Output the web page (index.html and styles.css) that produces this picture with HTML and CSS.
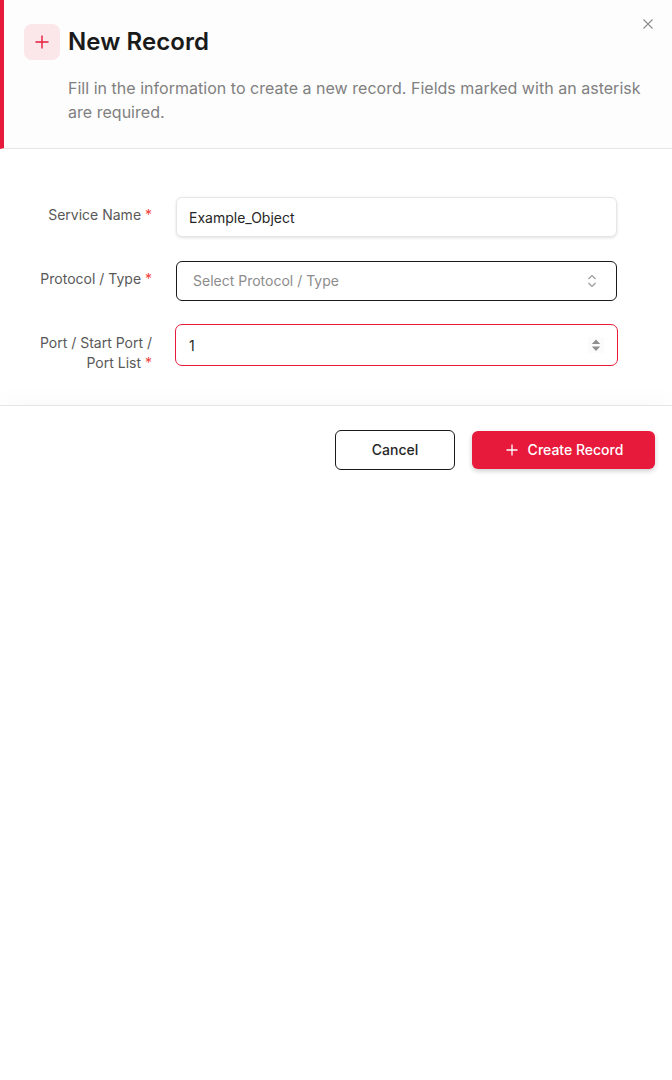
FILE: index.html
```html
<!DOCTYPE html>
<html lang="en">
<head>
<meta charset="utf-8">
<title>New Record</title>
<link rel="stylesheet" href="styles.css">
</head>
<body>
<div class="dialog">
  <header class="header">
    <div class="title-row">
      <span class="title-icon">
        <svg width="16" height="16" viewBox="0 0 16 16"><path d="M8 1.5v13M1.5 8h13" stroke="#e81a3c" stroke-width="1.4" fill="none"/></svg>
      </span>
      <h1 class="title">New Record</h1>
    </div>
    <p class="desc">Fill in the information to create a new record. Fields marked with an asterisk are required.</p>
    <button class="close" aria-label="Close">
      <svg width="12" height="12" viewBox="0 0 12 12"><path d="M1.5 1.5l9 9M10.5 1.5l-9 9" stroke="#8c8c8c" stroke-width="1.1" fill="none"/></svg>
    </button>
  </header>
  <form class="form">
    <div class="row row-name">
      <label class="label">Service Name <span class="req">*</span></label>
      <div class="control input-name">Example_Object</div>
    </div>
    <div class="row row-proto">
      <label class="label">Protocol / Type <span class="req">*</span></label>
      <div class="control select">
        <span class="placeholder">Select Protocol / Type</span>
        <svg width="10" height="14" viewBox="0 0 10 14"><path d="M1.5 5L5 1.5 8.5 5M1.5 9L5 12.5 8.5 9" stroke="#999" stroke-width="1.2" fill="none"/></svg>
      </div>
    </div>
    <div class="row row-port">
      <label class="label">Port / Start Port /<br>Port List <span class="req">*</span></label>
      <div class="control number">
        <span class="number-value">1</span>
        <span class="spin">
          <svg width="16" height="16" viewBox="0 0 16 16"><path d="M8 2.5L12.2 7H3.8zM8 14L12.2 9.5H3.8z" fill="#8f8f8f"/></svg>
        </span>
      </div>
    </div>
  </form>
  <footer class="footer">
    <button class="btn btn-cancel" type="button"><span class="btn-text">Cancel</span></button>
    <button class="btn btn-primary" type="button">
      <svg width="12" height="12" viewBox="0 0 12 12"><path d="M6 .5v11M.5 6h11" stroke="#fff" stroke-width="1.3" fill="none"/></svg>
      <span class="btn-text">Create Record</span>
    </button>
  </footer>
</div>
</body>
</html>
```
FILE: styles.css
```css
* { box-sizing: border-box; }
html, body { margin: 0; background: #fff; }
body { font-family: Inter, "Liberation Sans", sans-serif; color: #1a1a1a; }
.dialog { width: 672px; }
.header {
  position: relative;
  height: 149px;
  padding: 24px 24px 0 20px;
  background: #fdfdfd;
  border-left: 4px solid #e81a3c;
  border-bottom: 1px solid #e6e6e6;
}
.title-row { display: flex; align-items: center; gap: 8px; }
.title-icon {
  width: 36px; height: 36px;
  display: flex; align-items: center; justify-content: center;
  background: #fbe6ea;
  border-radius: 8px;
}
.title { margin: 0; font-size: 24px; line-height: 36px; font-weight: 600; letter-spacing: .08px; color: #1a1a1a; }
.desc { margin: 16px 0 0 44px; font-size: 16px; line-height: 24px; letter-spacing: .025px; color: #808080; }
.close {
  position: absolute; top: 18px; right: 18px;
  width: 12px; height: 12px; padding: 0;
  border: 0; background: none; display: flex;
}
.form { padding: 48px 55px 0 0; height: 256px; }
.row { display: flex; gap: 24px; align-items: flex-start; }
.row-proto { margin-top: 24px; }
.row-port { margin-top: 23px; }
.label {
  width: 152px; flex: none;
  text-align: right;
  font-size: 14px; line-height: 20px;
  color: #595959;
  padding-top: 8px;
}
.req { color: #f0413c; }
.control {
  flex: 1;
  height: 40px;
  display: flex; align-items: center; justify-content: space-between;
  font-size: 14px;
  color: #262626;
  background: #fff;
  border-radius: 6px;
}
.input-name {
  padding: 1px 12px 0;
  border: 1px solid #e6e6e6;
  box-shadow: 0 1px 3px rgba(0,0,0,.12);
}
.select { padding: 0 19px 0 16px; border: 1px solid #1a1a1a; }
.placeholder { color: #8c8c8c; margin-bottom: 1px; }
.number {
  height: 42px;
  padding: 0 13px;
  margin: 0 -1px;
  border: 1px solid #e81a3c;
  border-radius: 7px;
}
.number-value { margin-top: 1px; }
.row-port .label { padding-top: 9px; }
.spin {
  width: 16px; height: 16px; display: flex;
  background: #fbfbfb;
}
.footer {
  height: 85px;
  display: flex; justify-content: flex-end; gap: 17px;
  padding: 24px 17px 0 0;
  background: #fff;
  border-top: 1px solid #e6e6e6;
  box-shadow: 0 -6px 20px rgba(0,0,0,.025);
}
.btn {
  font-family: inherit; font-size: 14px; font-weight: 500;
  display: flex; align-items: center; justify-content: center;
  border-radius: 6px; padding: 0;
  height: 40px;
}
.btn-text { margin-bottom: 1px; }
.btn-cancel { width: 120px; background: #fff; color: #262626; border: 1px solid #1a1a1a; }
.btn-primary {
  width: 183px; height: 38px; margin-top: 1px; gap: 10px;
  padding-left: 2px;
  background: #e81a3c; color: #fff; border: 0;
  box-shadow: 0 2px 5px rgba(0,0,0,.2);
}
```
